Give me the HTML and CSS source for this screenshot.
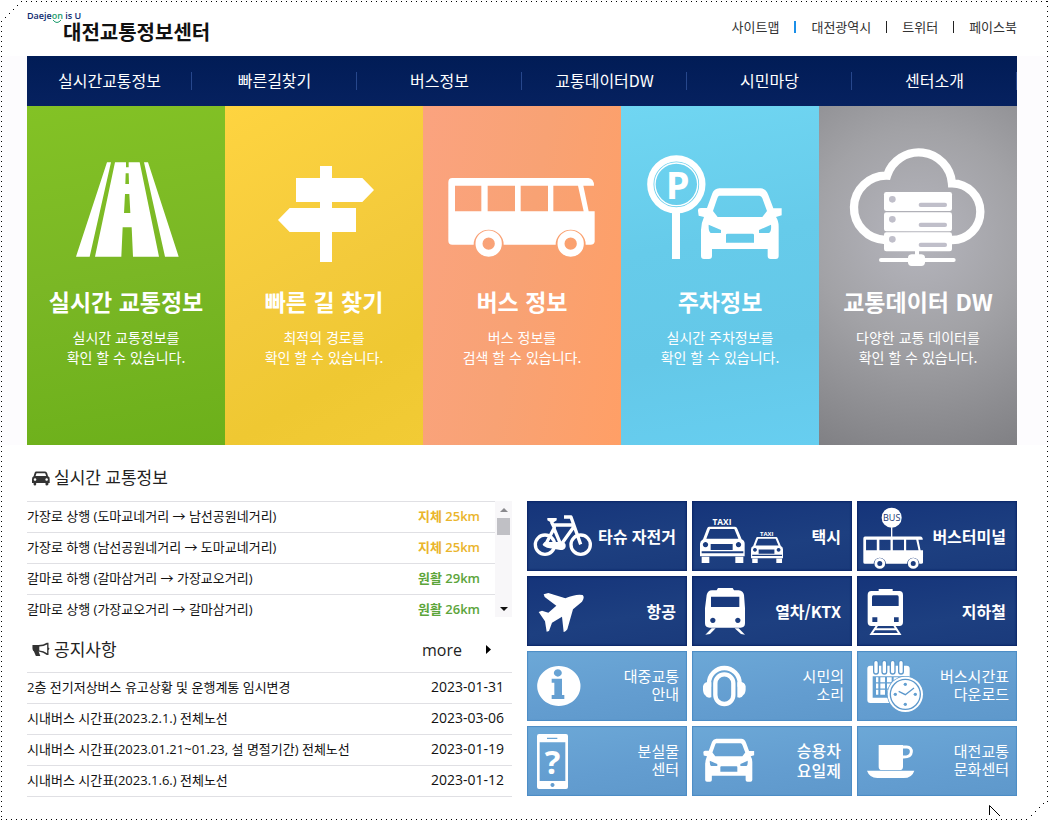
FILE: index.html
```html
<!DOCTYPE html>
<html lang="ko">
<head>
<meta charset="utf-8">
<meta name="viewport" content="width=device-width, initial-scale=1">
<title>대전교통정보센터</title>
<link rel="stylesheet" href="styles.css">
</head>
<body>
<svg class="defs" aria-hidden="true">
  <symbol id="bus" overflow="visible">
    <path fill-rule="evenodd" d="M97 144H505Q522 146 522 167H490L506 244H524V335Q522 344 512 344H497A45 45 0 0 0 407 344H251A45 45 0 0 0 161 344H97Q85 344 85 332V157Q85 144 97 144ZM105 167V244H184V167ZM203 167V244H285V167ZM302 167V244H384V167ZM400 167V244H491L474 167Z"/>
    <circle class="line" cx="206" cy="341" r="29" stroke-width="21"/>
    <circle class="line" cx="452" cy="341" r="29" stroke-width="21"/>
  </symbol>
  <symbol id="car" overflow="visible">
    <path fill-rule="evenodd" d="M898 175Q882 177 877 190L861 234H843Q833 234 834 243L836 257L852 261Q843 280 843 300V378Q843 387 852 387H867Q876 387 876 378V357H1043V378Q1043 387 1052 387H1067Q1076 387 1076 378V290Q1076 272 1068 261L1085 256V235H1060L1045 195Q1038 176 1022 175ZM898 197H1018Q1024 197 1027 205L1041 243L1027 261H893L879 243L892 205Q894 197 898 197ZM866 284L903 300V309H872Q865 305 866 284ZM1053 284L1017 300V309H1047Q1055 305 1053 284ZM922 311H998Q1002 311 1002 315V338H918V315Q918 311 922 311Z"/>
  </symbol>
  <symbol id="taxi" overflow="visible">
    <text x="600" y="91" font-size="25" font-weight="700" text-anchor="middle">TAXI</text>
    <path fill-rule="evenodd" d="M561 95H639Q644 95 646 101L659 133Q668 137 668 146V184H658H534V146Q534 138 543 133L555 101Q557 95 561 95ZM564 102L553 131H649L637 102ZM566 147V165H632V147ZM539 169V175H664V169ZM550 141A8 8 0 1 0 551 141ZM649 141A8 8 0 1 0 650 141Z"/>
    <path d="M539 185H562V204H539ZM640 185H664V204H640Z"/>
  </symbol>
</svg>

<svg class="frame" aria-hidden="true">
  <line class="dots" x1="21" y1="1.5" x2="100%" y2="1.5"/>
  <line class="dots" x1="1.5" y1="21" x2="1.5" y2="100%"/>
  <svg x="100%" y="0" height="100%" overflow="visible"><line class="dots" x1="-1.5" y1="1" x2="-1.5" y2="98%"/></svg>
  <svg x="0" y="100%" width="98%" overflow="visible"><line class="dots" x1="1" y1="-1.5" x2="100%" y2="-1.5"/></svg>
  <path d="M17 5h1v1h-1zM13 9h1v1h-1zM9 13h1v1h-1zM5 17h1v1h-1z"/>
  <svg x="100%" y="100%" overflow="visible"><path d="M-6-18h1v1h-1zM-10-14h1v1h-1zM-14-10h1v1h-1zM-18-6h1v1h-1z"/><path class="pointer" d="M-59.5-6V-15.5L-49-5"/></svg>
</svg>

<div class="page">
  <header class="header">
    <a class="logo" href="#">
      <span class="logo-tag">Daeje<span class="logo-on">on<svg viewBox="0 0 10 4" aria-hidden="true"><path d="M1 0Q5 5 9 0"/></svg></span> is U</span>
      <span class="logo-name">대전교통정보센터</span>
    </a>
    <ul class="util">
      <li><a href="#">사이트맵</a></li>
      <li><a href="#">대전광역시</a></li>
      <li><a href="#">트위터</a></li>
      <li><a href="#">페이스북</a></li>
    </ul>
  </header>

  <div class="hero">
    <nav class="nav">
      <a href="#">실시간교통정보</a>
      <a href="#">빠른길찾기</a>
      <a href="#">버스정보</a>
      <a href="#">교통데이터DW</a>
      <a href="#">시민마당</a>
      <a href="#">센터소개</a>
    </nav>
    <div class="cards">
      <a class="card green" href="#">
        <svg class="card-icon" viewBox="21 30 594 390" aria-hidden="true"><path fill-rule="evenodd" d="M261 97H273L209 380H168ZM285 97H359L417 380H339L335 292H308L304 380H225ZM318 97V112H326V97ZM317 130L316 162H327L326 130ZM315 192L312 249H331L328 192ZM372 97H384L476 380H435Z"/></svg>
        <h2>실시간 교통정보</h2>
        <p>실시간 교통정보를<br>확인 할 수 있습니다.</p>
      </a>
      <a class="card yellow" href="#">
        <svg class="card-icon" viewBox="615 30 594 390" aria-hidden="true"><path d="M900 108h36v36h91l35 36-35 36h-91v18h72v72h-72v90h-36v-90h-91l-35-36 35-36h91v-18h-72v-72h72z"/></svg>
        <h2>빠른 길 찾기</h2>
        <p>최적의 경로를<br>확인 할 수 있습니다.</p>
      </a>
      <a class="card orange" href="#">
        <svg class="card-icon" viewBox="9 30 594 390" aria-hidden="true"><use href="#bus"/></svg>
        <h2>버스 정보</h2>
        <p>버스 정보를<br>검색 할 수 있습니다.</p>
      </a>
      <a class="card blue" href="#">
        <svg class="card-icon" viewBox="603 30 594 390" aria-hidden="true">
          <circle class="line" cx="769" cy="163" r="78" stroke-width="19"/>
          <circle class="line" cx="769" cy="163" r="64" stroke-width="4"/>
          <text x="773" y="207" font-size="114" font-weight="700" text-anchor="middle">P</text>
          <path d="M756 248h24v139h-24z"/>
          <use href="#car"/>
        </svg>
        <h2>주차정보</h2>
        <p>실시간 주차정보를<br>확인 할 수 있습니다.</p>
      </a>
      <a class="card gray" href="#">
        <svg class="card-icon" viewBox="57 30 594 390" aria-hidden="true">
          <path class="line" stroke-width="25" d="M256 330A96 96 0 0 1 261 137A100 100 0 0 1 456 160A85 85 0 0 1 456 330"/>
          <rect x="252" y="186" width="204" height="57" rx="7"/><rect x="252" y="247" width="204" height="57" rx="7"/><rect x="252" y="307" width="204" height="57" rx="7"/>
          <g class="slot"><circle cx="277" cy="208" r="10"/><circle cx="277" cy="268" r="10"/><circle cx="277" cy="328" r="10"/><rect x="356" y="218" width="85" height="13" rx="6"/><rect x="356" y="278" width="85" height="13" rx="6"/><rect x="356" y="338" width="85" height="13" rx="6"/></g>
          <path d="M345 363h12v14h-12z"/><rect x="237" y="384" width="230" height="12" rx="6"/><rect x="324" y="373" width="51" height="35" rx="11"/>
        </svg>
        <h2>교통데이터 DW</h2>
        <p>다양한 교통 데이터를<br>확인 할 수 있습니다.</p>
      </a>
    </div>
  </div>

  <main class="main">
    <div class="boards">
      <section>
        <div class="board-head">
          <svg viewBox="35 95 56 46" aria-hidden="true"><path fill-rule="evenodd" d="M47 96H76Q80 96 82 101L85 111Q91 113 90 120V132H86V137Q84 140 81 140Q77 140 77 137V132H48V137Q48 140 44 140Q40 140 40 137V132H35V120Q35 113 40 111L43 101Q44 96 47 96ZM49 102L46 110H79L76 102ZM44 117A4 4 0 1 0 45 117ZM80 117A4 4 0 1 0 81 117Z"/></svg>
          <h3>실시간 교통정보</h3>
        </div>
        <div class="traffic">
          <ul class="rows" tabindex="0">
            <li><a href="#">가장로 상행 (도마교네거리 → 남선공원네거리)</a><strong class="slow">지체 25km</strong></li>
            <li><a href="#">가장로 하행 (남선공원네거리 → 도마교네거리)</a><strong class="slow">지체 25km</strong></li>
            <li><a href="#">갈마로 하행 (갈마삼거리 → 가장교오거리)</a><strong class="clear">원활 29km</strong></li>
            <li><a href="#">갈마로 상행 (가장교오거리 → 갈마삼거리)</a><strong class="clear">원활 26km</strong></li>
          </ul>
          <div class="scroll">
            <button type="button" aria-label="위로"><svg viewBox="0 0 8 4" aria-hidden="true"><path d="M4 0L8 4H0Z"/></svg></button>
            <span class="thumb"></span>
            <button class="down" type="button" aria-label="아래로"><svg viewBox="0 0 8 4" aria-hidden="true"><path d="M0 0H8L4 4Z"/></svg></button>
          </div>
        </div>
      </section>
      <section>
        <div class="board-head notice-head">
          <svg viewBox="93 71 52 44" aria-hidden="true"><path fill-rule="evenodd" d="M94 80H112Q126 80 136 73H141V87L144 90L141 95V109H136Q126 101 112 99L117 112H104L98 98Q93 97 94 80ZM114 84V96Q127 97 137 104V78Q127 84 114 84Z"/></svg>
          <h3>공지사항</h3>
          <a class="more" href="#">more <svg viewBox="0 0 5 9" aria-hidden="true"><path d="M0 0L5 4.500L0 9Z"/></svg></a>
        </div>
        <ul class="rows notices">
          <li><a href="#">2층 전기저상버스 유고상황 및 운행계통 임시변경</a><time>2023-01-31</time></li>
          <li><a href="#">시내버스 시간표(2023.2.1.) 전체노선</a><time>2023-03-06</time></li>
          <li><a href="#">시내버스 시간표(2023.01.21~01.23, 설 명절기간) 전체노선</a><time>2023-01-19</time></li>
          <li><a href="#">시내버스 시간표(2023.1.6.) 전체노선</a><time>2023-01-12</time></li>
        </ul>
      </section>
    </div>

    <div class="tiles">
      <a class="tile dark" href="#">
        <svg viewBox="15 18 198 210" aria-hidden="true"><g class="line" stroke-width="10"><circle cx="69" cy="149" r="29"/><circle cx="176" cy="149" r="29"/><path d="M126 66H147L176 148M94 90H152M155 96L118 148M88 80L97 98L72 146M95 98L116 148" stroke-linejoin="round"/></g><path d="M76 69H104V76L92 84Q80 80 76 76ZM68 141H120Q133 143 131 155Q129 165 115 165L75 158Q62 154 62 148Z"/></svg>
        <span>타슈 자전거</span>
      </a>
      <a class="tile dark taxi" href="#">
        <svg viewBox="510 18 198 210" aria-hidden="true"><use href="#taxi"/><use href="#taxi" transform="translate(304.700 57.900) scale(.716)"/></svg>
        <span>택시</span>
      </a>
      <a class="tile dark" href="#">
        <svg viewBox="255 18 198 210" aria-hidden="true"><use href="#bus" transform="translate(239.300 66.100) scale(.408)"/><circle cx="359" cy="68" r="30"/><path d="M357 97h4v30h-4z"/><text class="bus-label" x="359" y="77" font-size="27" font-weight="500" text-anchor="middle">BUS</text></svg>
        <span>버스터미널</span>
      </a>
      <a class="tile dark" href="#">
        <svg viewBox="15 243 198 210" aria-hidden="true"><path d="M65 298L79 294L130 310Q162 296 182 300Q189 306 180 320L153 343L136 403Q130 412 125 411L120 365L90 383L81 408L74 410L69 379L50 351L60 347L79 353L103 332L68 306Z"/></svg>
        <span>항공</span>
      </a>
      <a class="tile dark" href="#">
        <svg viewBox="510 243 198 210" aria-hidden="true"><path fill-rule="evenodd" d="M588 279H632L636 286H650Q664 288 666 300L669 340V385Q669 398 656 398H563Q549 398 549 385V340L554 300Q557 286 570 286H584ZM567 305V336H652V305ZM572 368A8 8 0 1 0 573 368ZM647 368A8 8 0 1 0 648 368Z"/><path d="M569 400H581L564 417L550 419ZM638 400H650L669 419L657 417Z"/></svg>
        <span>열차/KTX</span>
      </a>
      <a class="tile dark" href="#">
        <svg viewBox="255 243 198 210" aria-hidden="true"><path fill-rule="evenodd" d="M320 282H362V288H382Q393 288 393 300V381Q393 393 382 393H298Q287 393 287 381V300Q287 288 298 288H320ZM304 301Q300 301 300 306V333H380V306Q380 301 376 301ZM301 367V381H316V367ZM366 367V381H380V367Z"/><path class="line" stroke-width="6" d="M315 392L298 417H383L367 392M308 403H374"/></svg>
        <span>지하철</span>
      </a>
      <a class="tile light" href="#">
        <svg viewBox="15 18 198 210" aria-hidden="true"><path fill-rule="evenodd" d="M110 63A65 60 0 1 0 111 63ZM108 73A12 11 0 1 1 107 73ZM89 101H120V150H127V162H89V150H97V113H89Z"/></svg>
        <span>대중교통<br>안내</span>
      </a>
      <a class="tile light" href="#">
        <svg viewBox="510 18 198 210" aria-hidden="true"><path class="line" stroke-width="13" d="M561 125V115A46 46 0 0 1 653 115V125"/><rect class="line" stroke-width="13" x="580" y="88" width="54" height="89" rx="27"/><path d="M568 112V157Q556 162 549 150Q542 146 543 124Q546 112 556 111ZM646 112V157Q658 162 664 150Q672 146 671 124Q668 112 658 111Z"/></svg>
        <span>시민의<br>소리</span>
      </a>
      <a class="tile light" href="#">
        <svg viewBox="255 18 198 210" aria-hidden="true"><rect x="286" y="62" width="127" height="112" rx="9"/><path class="hole" d="M302 94H398V158H302Z"/><path class="pegs-gap" d="M312 54V80M337 54V80M362 54V80M387 54V80"/><path class="pegs" d="M312 53V80M337 53V80M362 53V80M387 53V80"/><path class="dates" d="M312 104H392M312 123H392M312 142H392"/><circle class="hole" cx="400" cy="148" r="55"/><circle cx="400" cy="148" r="53"/><circle class="ring" cx="400" cy="148" r="45"/><path class="hand" d="M380 139L400 149L426 129"/><g class="hole"><circle cx="400" cy="118" r="5"/><circle cx="400" cy="178" r="5"/><circle cx="370" cy="148" r="5"/><circle cx="430" cy="148" r="5"/></g></svg>
        <span>버스시간표<br>다운로드</span>
      </a>
      <a class="tile light" href="#">
        <svg viewBox="15 243 198 210" aria-hidden="true"><path fill-rule="evenodd" d="M51 267H132Q138 267 138 273V426Q138 432 132 432H51Q45 432 45 426V273Q45 267 51 267ZM53 292V408H130V292ZM75 278V282H106V278ZM91 414A6 6 0 1 0 92 414Z"/><text x="92" y="386" font-size="98" font-weight="700" text-anchor="middle">?</text></svg>
        <span>분실물<br>센터</span>
      </a>
      <a class="tile light strong" href="#">
        <svg viewBox="510 243 198 210" aria-hidden="true"><use href="#car" transform="translate(37.800 175.200) scale(.607)"/></svg>
        <span>승용차<br>요일제</span>
      </a>
      <a class="tile light" href="#">
        <svg viewBox="255 243 198 210" aria-hidden="true"><path d="M320 300H393V365Q393 375 383 375H330Q320 375 320 365ZM285 377H427Q420 399 395 399H316Q292 398 285 377Z"/><path class="line" stroke-width="9" d="M392 306H404Q419 307 418 321Q417 337 392 336"/></svg>
        <span>대전교통<br>문화센터</span>
      </a>
    </div>
  </main>
</div>
</body>
</html>
```
FILE: styles.css
```css
* {
  box-sizing: border-box;
}

body {
  position: relative;
  min-height: 100vh;
  margin: 0;
  background: #fff;
  color: #111;
  font-family: "Open Sans", "Noto Sans CJK KR", sans-serif;
  font-size: 13px;
  line-height: 16px;
}

a {
  color: inherit;
  text-decoration: none;
}

ul {
  margin: 0;
  padding: 0;
  list-style: none;
}

h2,
h3,
p {
  margin: 0;
}

.defs {
  position: absolute;
  width: 0;
  height: 0;
}

.frame {
  position: absolute;
  inset: 0;
  width: 100%;
  height: 100%;
  pointer-events: none;
}

.dots {
  stroke: #000;
  stroke-width: 1;
  stroke-dasharray: 1 4;
}

.pointer {
  fill: none;
  stroke: #000;
}

.line {
  fill: none;
  stroke: #fff;
}

/* Header */

.header {
  display: flex;
  justify-content: space-between;
  height: 56px;
  padding: 12px 32px 0 27px;
}

.logo {
  display: flex;
  flex-direction: column;
}

.logo-tag {
  color: #0b2a6f;
  font-size: 9px;
  font-weight: 600;
  line-height: 8px;
}

.logo-on {
  position: relative;
  color: #1c9c6c;
}

.logo-on svg {
  position: absolute;
  left: 0;
  top: 11px;
  width: 10px;
  height: 4px;
  fill: none;
  stroke: #1c9c6c;
}

.logo-name {
  padding-left: 36px;
  font-family: "Noto Sans CJK KR", sans-serif;
  font-size: 20px;
  font-weight: 700;
  line-height: 24px;
}

.util {
  display: flex;
  height: 30px;
  align-items: center;
  color: #333;
  font-family: "Noto Sans CJK KR", sans-serif;
}

.util li {
  display: flex;
  align-items: center;
}

.util li + li::before {
  content: "";
  width: 1px;
  height: 12px;
  margin: 0 15px;
  background: #222;
}

.util li:nth-child(2)::before {
  width: 2px;
  background: #1b8fe8;
}

/* Navigation and main cards */

.hero {
  padding: 0 32px 0 27px;
  background: #fdfcfe;
}

.nav {
  display: grid;
  grid-template-columns: repeat(6, 1fr);
  background: linear-gradient(#011c56, #06215f);
  color: #fff;
  font-family: "Noto Sans CJK KR", sans-serif;
  font-size: 16px;
  line-height: 24px;
}

.nav a {
  display: flex;
  align-items: center;
  justify-content: center;
  position: relative;
  height: 50px;
  padding-bottom: 2px;
}

.nav a::after {
  content: "";
  position: absolute;
  right: 0;
  top: 16px;
  width: 1px;
  height: 18px;
  background: #27478c;
}

.cards {
  display: grid;
  grid-template-columns: repeat(5, 1fr);
}

.card {
  padding: 34px 0 78px;
  color: #fff;
  font-family: "Noto Sans CJK KR", sans-serif;
  text-align: center;
}

.card-icon {
  display: block;
  width: 100%;
  height: 130px;
  fill: #fff;
  font-family: "Open Sans", sans-serif;
}

.card h2 {
  margin: 15px 0 10px;
  font-size: 23px;
  font-weight: 700;
  line-height: 32px;
}

.card p {
  font-size: 14px;
  font-weight: 400;
  line-height: 20px;
}

.green {
  background: linear-gradient(170deg, #83c225, #7ab725 50%, #6cb01a);
}

.yellow {
  background: linear-gradient(150deg, #fed440, #f3ca3b 50%, #efc832 75%, #f2cb35);
}

.orange {
  background: linear-gradient(100deg, #fba37f, #f8a274 50%, #ff9f66);
}

.blue {
  background: linear-gradient(170deg, #70d6f2, #66cbea 40%, #64c8e8 70%, #67cef0);
}

.gray {
  background: radial-gradient(circle at 50% 38%, #b5b5bd, #a2a2a6 45%, #808084);
}

.slot {
  fill: #c0bfca;
}

/* Boards */

.main {
  display: grid;
  grid-template-columns: 485fr 490fr;
  gap: 15px;
  padding: 0 32px 24px 27px;
}

.board-head {
  display: flex;
  align-items: center;
  height: 56px;
  padding: 10px 0 0 5px;
  color: #222;
  gap: 4px;
}

.board-head > svg {
  width: 18px;
  height: 15px;
  fill: #333;
}

.board-head h3 {
  font-size: 17px;
  font-weight: 400;
  line-height: 24px;
}

.notice-head {
  height: 55px;
}

.more {
  display: flex;
  align-items: center;
  gap: 24px;
  margin-left: auto;
  padding-right: 21px;
  font-size: 16px;
  line-height: 24px;
}

.more svg {
  width: 5px;
  height: 9px;
}

.traffic {
  display: flex;
  height: 116px;
}

.rows {
  flex: 1;
  overflow: hidden;
}

.rows li {
  display: flex;
  align-items: center;
  justify-content: space-between;
  height: 31px;
  padding: 0 15px 2px 0;
  border-top: 1px solid #e0e0e4;
}

.rows strong {
  font-weight: 600;
}

.slow {
  color: #eab52b;
}

.clear {
  color: #5ca53a;
}

.notices {
  border-bottom: 1px solid #e0e0e4;
}

.notices li {
  padding-right: 8px;
}

.rows time {
  font-size: 14px;
}

.scroll {
  display: flex;
  flex-direction: column;
  width: 17px;
  align-items: center;
  background: #f8f7f9;
}

.scroll button {
  display: flex;
  align-items: center;
  justify-content: center;
  width: 17px;
  height: 17px;
  padding: 0;
  border: 0;
  background: none;
}

.scroll svg {
  width: 8px;
  height: 4px;
  fill: #8a8a8e;
}

.scroll .down {
  margin-top: auto;
}

.scroll .down svg {
  fill: #111;
}

.thumb {
  width: 13px;
  height: 17px;
  background: #c0c0c5;
}

/* Shortcut tiles */

.tiles {
  display: grid;
  grid-template-columns: repeat(3, 1fr);
  grid-auto-rows: 70px;
  gap: 5px;
  padding-top: 56px;
}

.tile {
  display: flex;
  align-items: center;
  justify-content: space-between;
  padding-right: 11px;
  color: #fff;
  font-family: "Noto Sans CJK KR", sans-serif;
  font-size: 16px;
  line-height: 20px;
  text-align: right;
  white-space: nowrap;
}

.tile svg {
  flex: none;
  width: 66px;
  height: 70px;
  overflow: visible;
  fill: #fff;
  font-family: "Open Sans", sans-serif;
}

.dark {
  background: linear-gradient(170deg, #15347a, #1d3f80 60%, #1a3a7b);
  box-shadow: inset 0 0 2px 1px #0a2566;
  font-weight: 700;
}

.light {
  padding-right: 8px;
  background: linear-gradient(170deg, #6ca8d7, #639dd0 60%, #5e98cb);
  box-shadow: inset 0 0 1px 1px #4c8cc5;
  font-size: 15px;
  line-height: 18px;
}

.light span {
  padding-bottom: 2px;
}

.strong {
  padding-right: 11px;
  font-size: 16px;
  font-weight: 500;
  line-height: 20px;
}

.tile .bus-label {
  fill: #1a3872;
}

.tile .hole {
  fill: #639fd1;
}

.ring,
.hand,
.dates,
.pegs,
.pegs-gap {
  fill: none;
  stroke: #5c98cc;
  stroke-width: 4;
}

.pegs-gap,
.pegs {
  stroke-linecap: round;
  stroke-width: 18;
}

.pegs {
  stroke: #fff;
  stroke-width: 10;
}

.dates {
  stroke: #fff;
  stroke-width: 15;
  stroke-dasharray: 14 6;
  stroke-dashoffset: 7;
}
```
